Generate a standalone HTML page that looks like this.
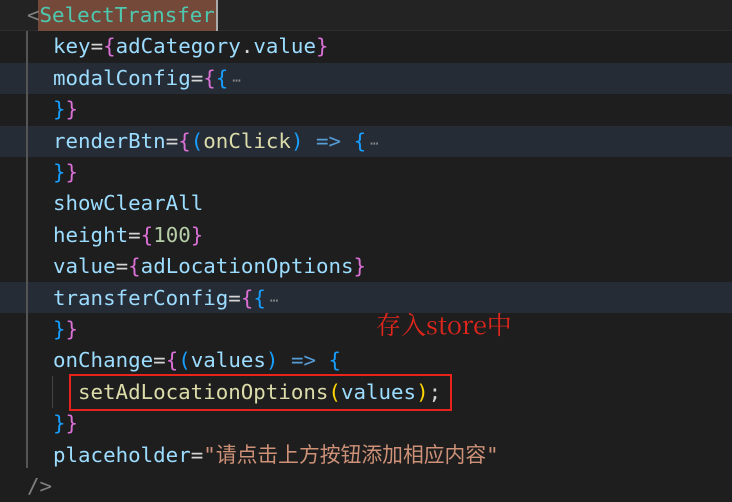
<!DOCTYPE html><html><head><style>
body{margin:0;width:732px;height:501px;background:#1e1e1e;overflow:hidden;position:relative;font-family:"DejaVu Sans Mono","Liberation Mono",monospace;font-size:20.8px}
.l{position:absolute;left:0;width:732px;height:31.4px;line-height:31.4px;white-space:pre;color:#9cdcfe}
.hl{background:#262c36}
.t{color:#4ec9b0}.g{color:#808080}.p{color:#da70d6}.b{color:#179fff}.y{color:#ffd700}.f{color:#dcdcaa}.s{color:#ce9178}.w{color:#d4d4d4}.k{color:#569cd6}.d{color:#888;font-size:14px;margin-left:4px}
.cjk{font-family:"DejaVu Sans Mono","Noto Sans CJK SC",monospace}
</style></head><body>
<div class="l" style="top:0;background:#232323;border-bottom:1px solid #2c2c2c;height:30px"></div>
<div style="position:absolute;left:38px;top:0;width:179px;height:31px;background:#74493a"></div>
<div style="position:absolute;left:216px;top:0;width:2px;height:31px;background:#aaa"></div>
<div class="l hl" style="top:63px"></div><div class="l hl" style="top:126px"></div><div class="l hl" style="top:282px"></div>
<div style="position:absolute;left:26px;top:31px;width:2px;height:437px;background:#555"></div>
<div style="position:absolute;left:52px;top:376px;width:1px;height:32px;background:#444"></div>
<div class="l" style="top:0;left:27px"><span class="g">&lt;</span><span class="t">SelectTransfer</span></div>
<div class="l" style="top:31.4px;left:53px">key<span class="w">=</span><span class="p">{</span>adCategory<span class="w">.</span>value<span class="p">}</span></div>
<div class="l" style="top:62.8px;left:53px">modalConfig<span class="w">=</span><span class="p">{</span><span class="b">{</span><span class="d">⋯</span></div>
<div class="l" style="top:94.2px;left:53px"><span class="b">}</span><span class="p">}</span></div>
<div class="l" style="top:125.6px;left:53px">renderBtn<span class="w">=</span><span class="p">{</span><span class="b">(</span><span class="f">onClick</span><span class="b">)</span> <span class="k">=&gt;</span> <span class="b">{</span><span class="d">⋯</span></div>
<div class="l" style="top:157px;left:53px"><span class="b">}</span><span class="p">}</span></div>
<div class="l" style="top:188.4px;left:53px">showClearAll</div>
<div class="l" style="top:219.8px;left:53px">height<span class="w">=</span><span class="p">{</span><span style="color:#b5cea8">100</span><span class="p">}</span></div>
<div class="l" style="top:251.2px;left:53px">value<span class="w">=</span><span class="p">{</span>adLocationOptions<span class="p">}</span></div>
<div class="l" style="top:282.6px;left:53px">transferConfig<span class="w">=</span><span class="p">{</span><span class="b">{</span><span class="d">⋯</span></div>
<div class="l" style="top:314px;left:53px"><span class="b">}</span><span class="p">}</span></div>
<div style="position:absolute;left:376px;top:308px;color:#e0261c;font-family:'Noto Serif CJK SC','Liberation Serif',serif;font-size:25px;line-height:32px">存入store中</div>
<div class="l" style="top:345.4px;left:53px">onChange<span class="w">=</span><span class="p">{</span><span class="b">(</span>values<span class="b">)</span> <span class="k">=&gt;</span> <span class="b">{</span></div>
<div class="l" style="top:376.8px;left:78px"><span class="f">setAdLocationOptions</span><span class="y">(</span>values<span class="y">)</span><span class="w">;</span></div>
<div style="position:absolute;left:69px;top:374px;width:379px;height:33px;border:2.5px solid #e8231b"></div>
<div class="l" style="top:408.2px;left:53px"><span class="b">}</span><span class="p">}</span></div>
<div class="l cjk" style="top:439.6px;left:53px">placeholder<span class="w">=</span><span class="s">"请点击上方按钮添加相应内容"</span></div>
<div class="l" style="top:471px;left:27px"><span class="g">/&gt;</span></div>
</body></html>
